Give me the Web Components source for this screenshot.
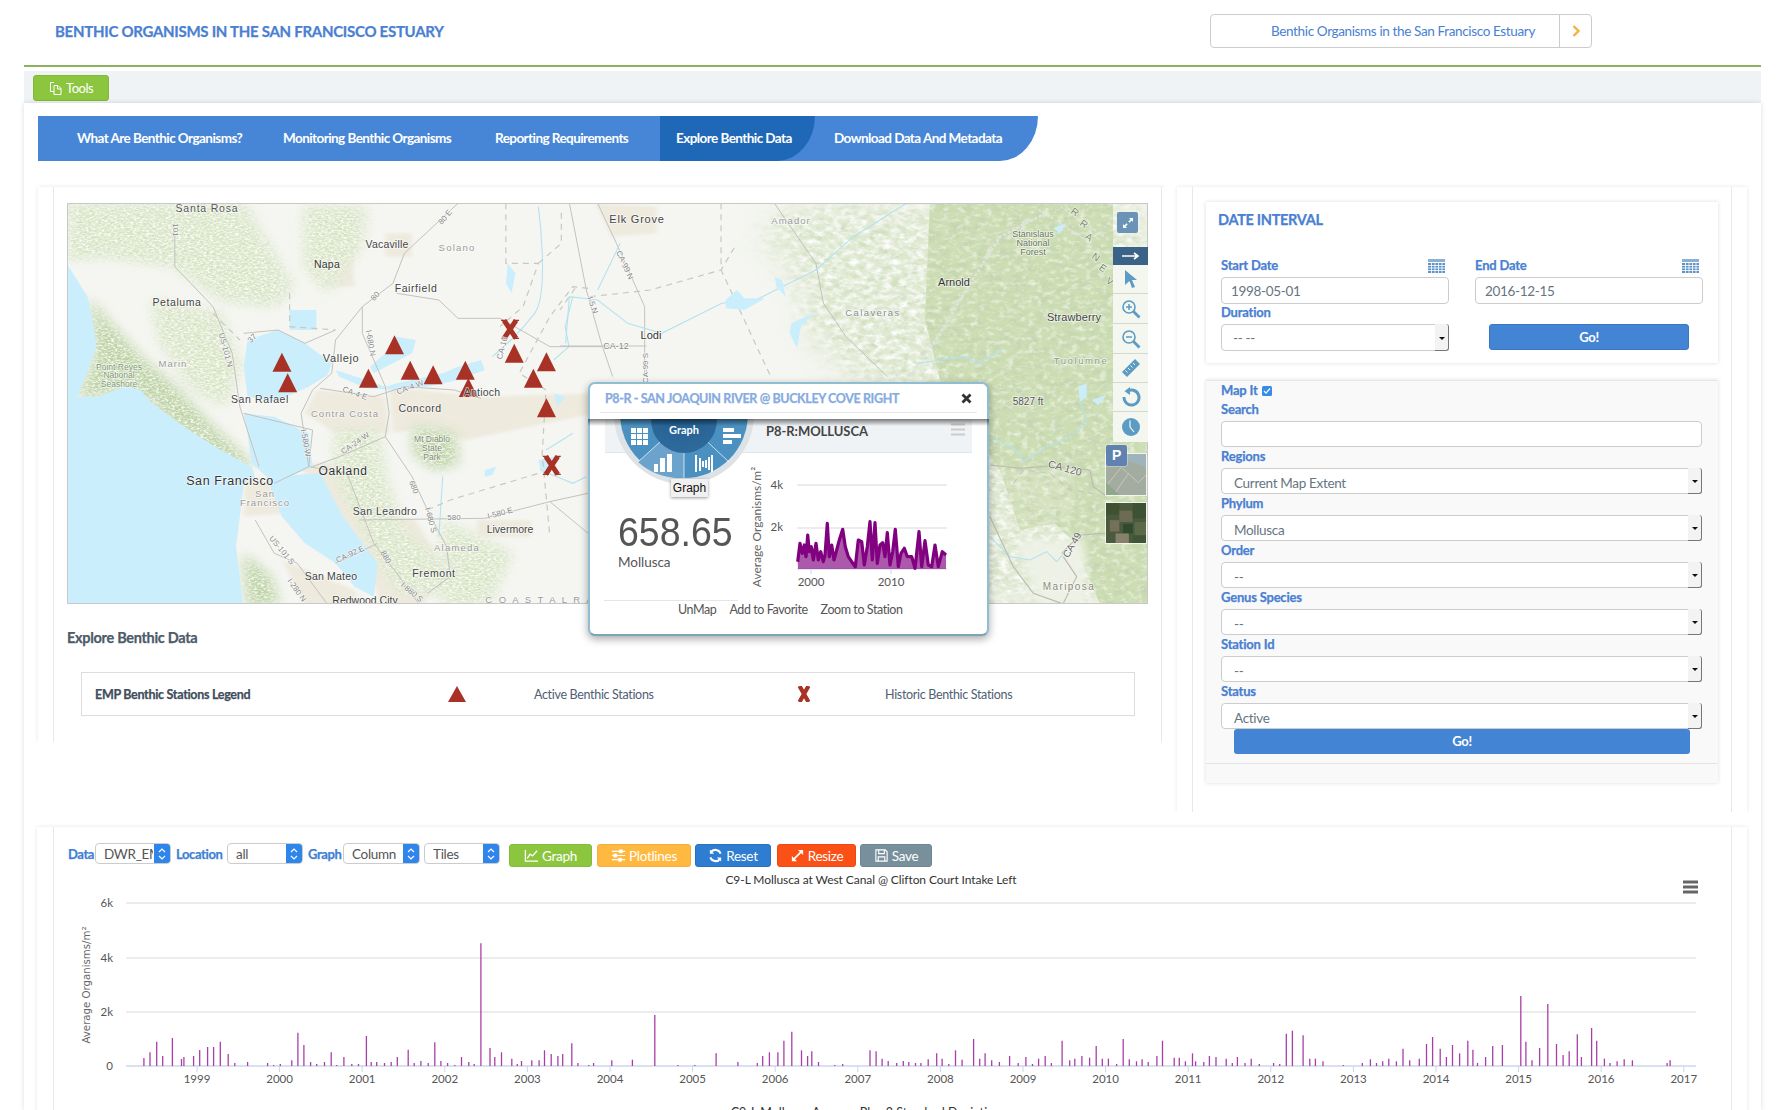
<!DOCTYPE html>
<html lang="en">
<head>
<meta charset="utf-8">
<title>Benthic Organisms in the San Francisco Estuary</title>
<style>
  html, body { margin: 0; height: 1110px; overflow: hidden; background: #fff; }
  body { font-family: Lato, "Liberation Sans", sans-serif; color: #555; letter-spacing: -.3px; }
  #page { display: block; width: 1737px; margin-left: 24px; }
</style>
</head>
<body>
<div id="page">
  <app-header>Benthic Organisms in the San Francisco Estuary</app-header>
  <tools-bar></tools-bar>
  <main-sheet>
    <nav-tabs>
      <nav-tab style="--w:206px">What Are Benthic Organisms?</nav-tab>
      <nav-tab style="--w:212px">Monitoring Benthic Organisms</nav-tab>
      <nav-tab style="--w:165px">Reporting Requirements</nav-tab>
      <nav-tab active style="--w:155px;--p:16px">Explore Benthic Data</nav-tab>
      <nav-tab style="--w:204px;--p:19px">Download Data And Metadata</nav-tab>
    </nav-tabs>
    <div slot="left"><map-panel></map-panel></div>
    <side-panel slot="right">
      <date-card></date-card>
      <filter-card>
        <filter-field label="Search" kind="input"></filter-field>
        <filter-field label="Regions" value="Current Map Extent"></filter-field>
        <filter-field label="Phylum" value="Mollusca"></filter-field>
        <filter-field label="Order" value="--"></filter-field>
        <filter-field label="Genus Species" value="--"></filter-field>
        <filter-field label="Station Id" value="--"></filter-field>
        <filter-field label="Status" value="Active"></filter-field>
      </filter-card>
    </side-panel>
    <chart-panel slot="bottom"></chart-panel>
  </main-sheet>
</div>

<script>
const UI_FONT = 'font-family: Lato, "Liberation Sans", sans-serif;';
const BLUE = '#4a80d2';
// the reference text is a little heavier than Lato bold
const HEAVY = '-webkit-text-stroke: .25px currentColor;';

class AppHeader extends HTMLElement {
  constructor() {
    super();
    this.attachShadow({ mode: 'open' }).innerHTML = `
      <style>
        :host { display: flex; align-items: center; height: 65px; border-bottom: 2px solid #8bb25f; ${UI_FONT} }
        h1 { margin: 0 0 3px 31px; font-size: 15px; font-weight: 700; color: ${BLUE}; text-transform: uppercase; letter-spacing: -.28px; ${HEAVY} }
        .box { display: flex; margin: -3px 169px 0 auto; width: 382px; height: 34px; box-sizing: border-box; border: 1px solid #ccc; border-radius: 4px; }
        .txt { width: 349px; padding-left: 60px; box-sizing: border-box; line-height: 32px; font-size: 13.5px; color: ${BLUE}; letter-spacing: -.36px; white-space: nowrap; border-right: 1px solid #ccc; }
        .go { flex: 1; display: flex; align-items: center; justify-content: center; }
      </style>
      <h1><slot></slot></h1>
      <div class="box">
        <div class="txt">${this.textContent}</div>
        <div class="go"><svg width="10" height="14" viewBox="0 0 10 14"><path d="M2.5 2l5 5-5 5" fill="none" stroke="#f5b13d" stroke-width="2.4"/></svg></div>
      </div>`;
  }
}
customElements.define('app-header', AppHeader);

class ToolsBar extends HTMLElement {
  constructor() {
    super();
    this.attachShadow({ mode: 'open' }).innerHTML = `
      <style>
        :host { display: block; height: 32px; box-sizing: border-box; margin-top: 4px; padding: 4px 0 0 9px; background: #eff3f5; ${UI_FONT} }
        button { all: unset; display: flex; align-items: center; gap: 3px; box-sizing: border-box; width: 76px; height: 26px; padding-left: 15px; background: #8cc63f; border: 1px solid #82b83a; border-radius: 3px; color: #fff; font-size: 13px; letter-spacing: -.45px; }
      </style>
      <button><svg width="14" height="15" viewBox="0 0 14 15" fill="none" stroke="#fff" stroke-width="1"><path d="M5 1.500H1.500v9H5M5 4.500h4l3 3v6H5zM8.500 4.500v3.500H12"/></svg>Tools</button>`;
  }
}
customElements.define('tools-bar', ToolsBar);

class MainSheet extends HTMLElement {
  constructor() {
    super();
    this.attachShadow({ mode: 'open' }).innerHTML = `
      <style>
        :host { display: block; height: 1007px; background: #fff; box-shadow: 0 0 5px rgba(0,0,0,.14); padding: 13px 0 0 14px; box-sizing: border-box; }
        .row { display: flex; align-items: flex-start; gap: 12px; margin-top: 26px; }
        .bottom { margin: 15px 14px 0 -1px; }
      </style>
      <slot></slot>
      <div class="row"><slot name="left"></slot><slot name="right"></slot></div>
      <div class="bottom"><slot name="bottom"></slot></div>`;
  }
}
customElements.define('main-sheet', MainSheet);

class NavTabs extends HTMLElement {
  constructor() {
    super();
    this.attachShadow({ mode: 'open' }).innerHTML = `
      <style>
        :host { display: flex; width: 1000px; height: 45px; padding-left: 39px; box-sizing: border-box; background: #4786d6; border-bottom-right-radius: 38px 45px; }
      </style>
      <slot></slot>`;
  }
}
customElements.define('nav-tabs', NavTabs);

class NavTab extends HTMLElement {
  constructor() {
    super();
    this.attachShadow({ mode: 'open' }).innerHTML = `
      <style>
        :host { display: block; width: var(--w); box-sizing: border-box; padding-left: var(--p, 0); height: 45px; line-height: 45px; color: #fff; font-size: 13.5px; font-weight: 700; white-space: nowrap; letter-spacing: -.56px; ${UI_FONT} }
        :host([active]) { background: #1f68b8; border-bottom-right-radius: 38px 45px; }
      </style>
      <slot></slot>`;
  }
}
customElements.define('nav-tab', NavTab);

class MapPanel extends HTMLElement {
  constructor() {
    super();
    this.attachShadow({ mode: 'open' }).innerHTML = `
      <style>
        :host { display: block; width: 1127px; height: 555px; box-sizing: border-box; padding: 0 0 0 15px; box-shadow: 0 0 4px rgba(0,0,0,.1); ${UI_FONT} clip-path: inset(-6px 0 0 -6px); }
        .inner { height: 555px; width: 1109px; box-sizing: border-box; border-left: 1px solid #e8e8e8; border-right: 1px solid #e8e8e8; padding: 16px 13px 0 13px; }
        .wrap { position: relative; height: 401px; }
        h3 { margin: 24px 0 0; font-size: 14.5px; line-height: 20px; color: #4d5b69; font-weight: 700; letter-spacing: -.3px; ${HEAVY} }
        .legend { display: grid; grid-template-columns: 352px 87px 262px 89px 1fr; align-items: center; height: 44px; margin: 24px 13px 0 14px; padding-left: 13px; box-sizing: border-box; border: 1px solid #ddd; font-size: 12.5px; color: #4f6072; letter-spacing: -.32px; white-space: nowrap; }
        .legend b { color: #3f4d5c; font-weight: 700; letter-spacing: -.3px; ${HEAVY} }
      </style>
      <div class="inner">
        <div class="wrap">
          <topo-map></topo-map>
          <map-tools></map-tools>
          <station-popup></station-popup>
        </div>
        <h3>Explore Benthic Data</h3>
        <div class="legend">
          <b>EMP Benthic Stations Legend</b>
          <svg width="20" height="16" viewBox="0 0 20 16"><path d="M10 0l9 16H1z" fill="#a93226"/></svg>
          <span>Active Benthic Stations</span>
          <svg width="16" height="16" viewBox="0 0 16 16"><path d="M3.500 0l9 16M12.500 0l-9 16" stroke="#a93226" stroke-width="4.200" fill="none"/></svg>
          <span>Historic Benthic Stations</span>
        </div>
      </div>`;
  }
}
customElements.define('map-panel', MapPanel);

class TopoMap extends HTMLElement {
  constructor() {
    super();
    const labels = [
      // x, y, text, size, colour, rotate, spacing
      [207,208,'Santa Rosa',10.5,'#555',0,.8],[387,244,'Vacaville',10.5,'#444',0,.2],[457,248,'Solano',9.5,'#999',0,1.2],
      [327,264,'Napa',10.5,'#333',0,.2],[416,288,'Fairfield',10.5,'#444',0,.6],[177,302,'Petaluma',10.5,'#444',0,.6],
      [119,367,'Point Reyes',8.5,'#7d9874',0,0],[119,375.5,'National',8.5,'#7d9874',0,0],[119,384,'Seashore',8.5,'#7d9874',0,0],
      [173,364,'Marin',9.5,'#9a9a9a',0,1],[341,358,'Vallejo',11,'#444',0,.6],[260,399,'San Rafael',10.5,'#444',0,.6],
      [345,414,'Contra Costa',9.5,'#999',0,1],[420,408,'Concord',10.5,'#444',0,.5],[482,392,'Antioch',10.5,'#444',0,.2],
      [432,439,'Mt Diablo',8.5,'#7d8a70',0,0],[432,448,'State',8.5,'#7d8a70',0,0],[432,457,'Park',8.5,'#7d8a70',0,0],
      [343,471,'Oakland',12,'#333',0,.6],[230,481,'San Francisco',12.5,'#333',0,.6],[265,494,'San',9.5,'#999',0,1],[265,503,'Francisco',9.5,'#999',0,1],
      [385,511,'San Leandro',10.5,'#444',0,.4],[510,529,'Livermore',10.5,'#444',0,0],[457,548,'Alameda',9.5,'#999',0,1.2],
      [331,576,'San Mateo',10.5,'#444',0,.2],[434,573,'Fremont',10.5,'#444',0,.6],[365,600,'Redwood City',10.5,'#444',0,0],
      [560,600,'C O A S T A L   R A N G E',9.5,'#999',0,2],[637,219,'Elk Grove',11,'#444',0,.8],[791,221,'Amador',9.5,'#999',0,1],
      [651,335,'Lodi',11,'#333',0,0],[616,346,'CA-12',9,'#888',0,0],[873,313,'Calaveras',9.5,'#8a8a8a',0,1.4],
      [954,282,'Arnold',11,'#333',0,0],[1074,317,'Strawberry',11,'#444',0,.1],[1033,234,'Stanislaus',9,'#66765a',0,0],
      [1033,243,'National',9,'#66765a',0,0],[1033,251.5,'Forest',9,'#66765a',0,0],[1081,361,'Tuolumne',9.5,'#8a9a82',0,1.6],
      [1075,212,'R',10,'#7a8a6a',35],[1084,224,'R',10,'#7a8a6a',35],[1089,237,'A',10,'#7a8a6a',35],[1096,257,'N',10,'#7a8a6a',35],
      [1103,268,'E',10,'#7a8a6a',35],[1110,281,'V',10,'#7a8a6a',35],[1028,401,'5827 ft',10,'#555',0,0],
      [1065,468,'CA 120',10.5,'#666',15,0],[1072,545,'CA 49',10,'#666',-60,0],[1069,586,'Mariposa',10,'#8a8a7a',0,1.4],
      [176,230,'101',8,'#888',90],[445,217,'80 E',8,'#888',-50],[375,296,'80',8,'#888',-50],[252,338,'37',8,'#888',-45],
      [226,350,'US-101 N',8,'#888',75],[371,343,'I-680 N',8,'#888',80],[502,348,'CA-16',8,'#888',-75],[593,305,'I-5 N',8,'#888',70],
      [625,265,'CA-99 N',8,'#888',65],[645,368,'CA-99 S',8,'#888',-90],[306,443,'I-580 W',8,'#888',80],[355,443,'CA-24 W',8,'#888',-35],
      [414,487,'680',8,'#888',70],[431,520,'I-680 S',8,'#888',75],[454,517,'580',8,'#888',0],[500,513,'I-580 E',8,'#888',-15],
      [282,550,'US-101 S',8,'#888',50],[350,554,'CA-92 E',8,'#888',-25],[386,557,'880',8,'#888',60],[297,590,'I-280 N',8,'#888',55],
      [412,592,'I-880 S',8,'#888',40],[355,393,'CA-4 E',8,'#888',20],[410,387,'CA-4 W',8,'#888',-20]
    ];
    const text = labels.map(([x, y, t, s, c, r = 0, ls = 0]) =>
      `<text x="${x}" y="${y}" font-size="${s}" fill="${c}" letter-spacing="${ls}" transform="rotate(${r} ${x} ${y})" dy=".35em">${t}</text>`).join('');
    const tri = [[580,488],[595,550],[874,436],[806,536],[915,512],[975,526],[1059,512],[1067,564],[1187,461],[1271,487],[1237,536],[1271,625]]
      .map(([x, y]) => { const a = 60 + x / 2.613, b = 200 + y / 3; return `<path d="M${a} ${b - 10}l9.500 19h-19z" fill="#a93226"/>`; }).join('');
    const xs = [[1176,388],[1285,796]]
      .map(([x, y]) => { const a = 60 + x / 2.613, b = 200 + y / 3; return `<path d="M${a - 6} ${b - 9}l12 18M${a + 6} ${b - 9}l-12 18" stroke="#a93226" stroke-width="5" fill="none"/><path d="M${a - 9} ${b - 9}h6M${a + 3} ${b - 9}h6M${a - 9} ${b + 9}h6M${a + 3} ${b + 9}h6" stroke="#a93226" stroke-width="1.400"/>`; }).join('');
    this.attachShadow({ mode: 'open' }).innerHTML = `
      <style>
        :host { display: block; height: 401px; box-sizing: border-box; }
        svg { display: block; width: 1081px; height: 401px; font-family: "Liberation Sans", sans-serif; letter-spacing: 0; }
        text { text-anchor: middle; paint-order: stroke; stroke: rgba(255,255,255,.7); stroke-width: 1.4px; }
        .road { fill: none; stroke: #c2c2bf; stroke-width: 1; vector-effect: non-scaling-stroke; }
        .dash { fill: none; stroke: #c8c8c2; stroke-width: 1.2; stroke-dasharray: 6 5; vector-effect: non-scaling-stroke; }
        .river { fill: none; stroke: #b4e2f0; stroke-width: 1.1; vector-effect: non-scaling-stroke; }
      </style>
      <svg viewBox="67 203 1081 401">
        <defs>
          <filter id="tex" x="-15%" y="-15%" width="130%" height="130%">
            <feGaussianBlur in="SourceGraphic" stdDeviation="16" result="soft"/>
            <feTurbulence type="fractalNoise" baseFrequency=".12 .2" numOctaves="4" seed="7" result="n"/>
            <feColorMatrix in="n" type="matrix" values="0 0 0 0 1  0 0 0 0 1  0 0 0 0 1  2.400 0 0 0 -.98" result="w"/>
            <feComposite in="w" in2="soft" operator="in" result="wm"/>
            <feTurbulence type="fractalNoise" baseFrequency=".1 .17" numOctaves="4" seed="21" result="n2"/>
            <feColorMatrix in="n2" type="matrix" values="0 0 0 0 .6  0 0 0 0 .7  0 0 0 0 .48  2.200 0 0 0 -.98" result="d"/>
            <feComposite in="d" in2="soft" operator="in" result="dm"/>
            <feMerge><feMergeNode in="soft"/><feMergeNode in="dm"/><feMergeNode in="wm"/></feMerge>
          </filter>
          <filter id="dk" x="-5%" y="-5%" width="110%" height="110%">
            <feTurbulence type="fractalNoise" baseFrequency=".08 .16" numOctaves="5" seed="12" result="n"/>
            <feColorMatrix in="n" type="matrix" values="0 0 0 0 .55  0 0 0 0 .66  0 0 0 0 .43  2.400 0 0 0 -1" result="w"/>
            <feComposite in="w" in2="SourceAlpha" operator="in" result="wm"/>
            <feTurbulence type="fractalNoise" baseFrequency=".14 .22" numOctaves="3" seed="4" result="n2"/>
            <feColorMatrix in="n2" type="matrix" values="0 0 0 0 .95  0 0 0 0 .97  0 0 0 0 .9  1.600 0 0 0 -.78" result="w2"/>
            <feComposite in="w2" in2="SourceAlpha" operator="in" result="wm2"/>
            <feMerge><feMergeNode in="SourceGraphic"/><feMergeNode in="wm"/><feMergeNode in="wm2"/></feMerge>
          </filter>
          <filter id="soft" x="-10%" y="-10%" width="120%" height="120%"><feGaussianBlur stdDeviation="5"/></filter>
        </defs>
        <rect x="67" y="203" width="1081" height="401" fill="#f5f6f2"/>

        <!-- hills and towns, left half, in the crop's own scale -->
        <g transform="translate(60 200) scale(.3827 .3333)">
          <g filter="url(#soft)" fill="#eeeade">
            <path d="M670 570L850 590 860 700 720 700 640 640z"/>
            <path d="M860 560L1100 590 1400 580 1400 640 1060 720 960 680 870 700z"/>
            <path d="M680 150L760 150 770 260 700 260z"/>
            <path d="M850 100L920 100 920 170 850 170z"/>
            <path d="M620 790L780 790 860 950 930 960 1000 1100 950 1215 840 1215 780 1040 680 880z"/>
            <path d="M1090 960L1230 960 1230 1010 1090 1010z"/>
            <path d="M480 840L580 840 590 940 480 950z"/>
            <path d="M580 1080L770 1170 780 1215 640 1215z"/>
            <path d="M1400 10L1560 20 1560 100 1440 110z"/>
          </g>
          <g filter="url(#tex)" fill="#dde8cb">
            <path d="M20 10H480L610 260 560 320 420 300 300 200 120 170 20 180z"/>
            <path d="M640 20H800L790 130 700 280 640 200z"/>
            <path d="M240 300L420 340 470 500 430 620 340 560 260 420z"/>
            <path d="M720 690H830L850 830 900 1000 980 1060 1010 1180H880L800 1010 720 830z"/>
            <path d="M1000 960L1180 1060 1120 1215H1000z"/>
          </g>
          <g filter="url(#tex)" fill="#bcd3a0">
            <path d="M72 290L140 380 210 470 300 560 400 680 500 790 480 810 400 760 300 680 240 610 170 560 100 590 45 590 90 480 85 360z"/>
            <path d="M925 680L1030 700 1040 790 980 810 925 760z"/>
            <path d="M480 1060L550 1130 570 1215H490z"/>
          </g>
        </g>

        <!-- green mountains, right half -->
        <g filter="url(#tex)" fill="#e0e9d2"><path d="M793 203H1150V604H960L930 560 950 420 860 380 810 340 800 280 760 240z"/></g>
        <g filter="url(#dk)" fill="#cddeb4">
          <path d="M930 203H1113V440L1148 442V604H1100L1072 540 1000 470 940 380 925 320z"/>
        </g>
        <g filter="url(#dk)" fill="#d6e3c0"><path d="M1000 470L1075 470 1075 520 1020 530z"/></g>
        <g fill="#eef2e6" filter="url(#soft)"><path d="M1014 540L1085 540 1085 604 1040 604z"/></g>

        <!-- water -->
        <g transform="translate(60 200) scale(.3827 .3333)" fill="#cbeefc">
          <path d="M20 195L45 240 72 290 85 360 95 440 70 520 45 590 100 590 170 560 210 570 240 610 300 660 350 700 420 750 500 800 510 830 480 850 470 950 460 1040 470 1130 478 1215H20z"/>
          <path d="M490 420L570 390 640 430 710 490 700 525 650 560 560 605 490 590 480 500z"/>
          <path d="M480 640L560 650 650 700 660 800 600 830 540 830 500 790 490 700z"/>
          <path d="M540 830L680 820 740 950 830 1090 820 1190 770 1160 720 1090 640 1030 580 950z"/>
          <path d="M810 500L850 460 880 410 930 420 920 460 870 490 820 520z"/>
          <path d="M600 330L670 330 670 390 600 390z"/>
          <path d="M720 510L800 540 850 560 880 550 1000 520 1040 500 1100 480 1110 510 1040 540 960 560 880 570 800 565 730 530z"/>
          <path d="M1170 190L1190 220 1180 280 1165 250z"/>
          <path d="M1250 780L1290 770 1290 810 1255 810z"/>
          <path d="M1110 810L1140 800 1130 825 1110 830z"/>
          <path d="M1290 580L1320 590 1300 620z"/>
        </g>
        <g transform="translate(60 200) scale(.3827 .3333)">
          <path class="river" d="M1130 470C1170 430 1200 400 1240 340S1250 20 1250 20"/>
          <path class="river" d="M1290 480L1330 440 1320 380 1340 290"/>
          <path class="river" d="M1270 750L1340 700M1255 810L1340 850 1375 830M990 1010L1000 830"/>
          <path class="road" d="M300 70V200L400 320 450 460 470 620 520 800M480 640L660 690 650 800 560 850"/>
          <path class="road" d="M1040 10L900 160 870 250 790 320 720 420 710 520 660 570 630 640 650 800 750 820 820 1030 880 1120 940 1215"/>
          <path class="road" d="M480 400L570 390 640 430 720 390M880 280L990 300 1040 355 1150 355 1280 440 1420 440"/>
          <path class="road" d="M790 320V400L850 560 860 640 850 710 920 830 960 930 1010 1040 1020 1130 960 1180"/>
          <path class="road" d="M680 565L820 590 900 560 1030 570 1100 595M850 710L730 770 660 800"/>
          <path class="road" d="M780 960L1110 955 1280 905 1380 880M510 960L560 1060 620 1090 700 1215M720 1090L830 1030M1280 905L1380 1000"/>
          <path class="dash" d="M1165 10V190L1250 190 1210 320 1150 380M1250 190L1310 130 1310 30M600 280L600 380 720 390M400 340L470 420"/>
          <path class="dash" d="M1380 265L1340 260 1280 350 1200 520 1270 570 1260 760 1280 1010"/>
          <path class="dash" d="M960 930L1020 900 1250 820"/>
        </g>
        <!-- right half roads and rivers -->
        <g transform="translate(560 200) scale(.3763 .3333)">
          <path class="dash" d="M428 10L428 210 560 530M80 290L240 270 428 210 470 130M40 265L0 330"/>
          <path class="road" d="M25 10L70 270 110 430 140 530M100 10L150 130 225 320V530M0 438H230"/>
          <path class="road" d="M570 10L680 190 700 310 760 410 870 530"/>
          <path class="river" d="M160 130L100 270M15 430L25 290 100 300 180 370 270 400 430 310 520 300 590 260 680 210 780 110 920 10"/>
          <path d="M440 300L470 270 490 295 545 295 490 330 440 325z" fill="#cbeefc"/>
          <path d="M570 230L590 240 600 290 575 260z" fill="#cbeefc"/>
          <path d="M615 370L680 335 640 380 630 445 610 400z" fill="#cbeefc"/>
          <path d="M1310 85L1345 70 1330 100z" fill="#cbeefc"/>
          <path d="M930 530L1010 400 1090 250 1170 110 1290 40" fill="none" stroke="#dfe3e3" stroke-width="2.500" stroke-dasharray="3 2" vector-effect="non-scaling-stroke"/>
          <path d="M950 490L1075 470 1110 490 1175 450" class="river"/>
          <path d="M1260 20L1410 130M1330 20L1460 120" fill="none" stroke="#dfe3e3" stroke-width="1.500" stroke-dasharray="3 2" vector-effect="non-scaling-stroke"/>
        </g>
        <!-- lower right -->
        <g transform="translate(980 380) scale(.3333)">
          <path d="M295 20L320 10 320 50 300 65z M335 60L380 45 355 75z" fill="#cbeefc"/>
          <path class="river" d="M30 170L110 210 130 245 200 200 260 175 320 130 300 65M30 470L90 530 150 540 200 515 230 545 260 510"/>
          <path d="M30 255L120 265 210 258 330 270 340 320 375 345M245 520L300 465 375 460M250 530L290 590 250 670M30 410L100 560 160 640 245 670" fill="none" stroke="#bcbcb6" stroke-width="1.200" vector-effect="non-scaling-stroke"/>
          <path class="dash" d="M100 310L130 270 210 280 270 330 340 340"/>
        </g>
        ${tri}${xs}
        <g>${text}</g>
        <rect x="67.500" y="203.500" width="1080" height="400" fill="none" stroke="#c8c8c8"/>
      </svg>`;
  }
}
customElements.define('topo-map', TopoMap);

class MapTools extends HTMLElement {
  constructor() {
    super();
    const ic = '#5b9bc4';
    const cell = (h, svg) => `<div class="cell" style="height:${h}px">${svg}</div>`;
    this.attachShadow({ mode: 'open' }).innerHTML = `
      <style>
        :host { position: absolute; left: 1046px; top: 9px; width: 35px; height: 335px; }
        .exp { position: absolute; left: 4px; top: 0; width: 21px; height: 21px; background: #6b93b8; border-radius: 2px; box-shadow: 0 0 0 2px rgba(255,255,255,.25); display: flex; align-items: center; justify-content: center; }
        .strip { position: absolute; left: 0; top: 35px; width: 35px; background: #f4f6f0; }
        .cell { display: flex; align-items: center; justify-content: center; border-bottom: 1px solid #d5d8cc; box-sizing: border-box; }
        .cell:last-child { border-bottom: 0; }
        .dark { background: #3b6388; height: 18px; display: flex; align-items: center; justify-content: center; }
        .p { position: absolute; left: -7px; top: 233px; width: 21px; height: 21px; background: #5f82b0; border-radius: 2px; z-index: 1; color: #fff; font: 700 14px/21px "Liberation Sans", sans-serif; text-align: center; box-shadow: 0 0 0 1px rgba(255,255,255,.3); }
        .t { position: absolute; left: -8px; display: block; border: 1px solid rgba(255,255,255,.7); box-sizing: border-box; }
      </style>
      <div class="exp"><svg width="12" height="12" viewBox="0 0 12 12" fill="#fff"><path d="M7 1h4v4L9.600 3.600 7.500 5.700 6.300 4.500 8.400 2.400zM5 11H1V7l1.400 1.400 2.100-2.100 1.200 1.200-2.100 2.100z"/></svg></div>
      <div class="strip">
        <div class="dark"><svg width="18" height="8" viewBox="0 0 18 8"><path d="M0 4h15M12 1l4 3-4 3" fill="none" stroke="#fff" stroke-width="1.600"/></svg></div>
        ${cell(29, `<svg width="16" height="20" viewBox="0 0 16 20"><path d="M2 1l12 10H9l3 7-3 1-2.500-7L2 16z" fill="${ic}"/></svg>`)}
        ${cell(30, `<svg width="20" height="20" viewBox="0 0 20 20" fill="none" stroke="${ic}"><circle cx="8" cy="8" r="6" stroke-width="1.600"/><path d="M12.500 12.500L18.500 18.500" stroke-width="2.800"/><path d="M8 5v6M5 8h6" stroke-width="1.500"/></svg>`)}
        ${cell(30, `<svg width="20" height="20" viewBox="0 0 20 20" fill="none" stroke="${ic}"><circle cx="8" cy="8" r="6" stroke-width="1.600"/><path d="M12.500 12.500L18.500 18.500" stroke-width="2.800"/><path d="M5 8h6" stroke-width="1.500"/></svg>`)}
        ${cell(29, `<svg width="20" height="20" viewBox="0 0 20 20"><path d="M14 1l5 5L6 19l-5-5z" fill="${ic}"/><path d="M12 5l2 2M9.500 7.500l2 2M7 10l2 2M4.500 12.500l2 2" stroke="#f4f6f0" stroke-width="1"/></svg>`)}
        ${cell(29, `<svg width="20" height="20" viewBox="0 0 20 20" fill="none"><path d="M6 4.500A7.500 7.500 0 1 1 3 10" stroke="${ic}" stroke-width="3"/><path d="M9 0v8L3.500 4.200z" fill="${ic}"/></svg>`)}
        ${cell(30, `<svg width="20" height="20" viewBox="0 0 20 20"><circle cx="10" cy="10" r="9" fill="${ic}"/><path d="M9 3.500V10l4 5" stroke="#f4f6f0" stroke-width="1.200" fill="none"/></svg>`)}
      </div>
      <svg class="t" style="top:241px" width="42" height="43" viewBox="0 0 42 43">
        <rect width="42" height="43" fill="#a3aca0"/>
        <path d="M0 0L42 0 42 14 20 6 0 12z" fill="#9fb3bb"/>
        <path d="M0 34L16 14 34 30 42 22M8 43L24 20" stroke="#c8c8bc" fill="none"/>
        <path d="M0 30L14 43H0z" fill="#8fa78b"/>
      </svg>
      <svg class="t" style="top:290px" width="42" height="42" viewBox="0 0 42 42">
        <rect width="42" height="42" fill="#4a5a3c"/>
        <path d="M0 0h14v12H0z" fill="#3e5131"/><path d="M14 8h14v12H14z" fill="#6c6b54"/><path d="M28 0h14v16H28z" fill="#3c5232"/>
        <path d="M4 18h10v12H4z" fill="#75705a"/><path d="M18 22h10v10H18z" fill="#2f4a2e"/><path d="M30 20h12v14H30z" fill="#5d6a4a"/>
        <path d="M10 32h14v10H10z" fill="#87806a"/><path d="M28 34h14v8H28z" fill="#3f5536"/>
      </svg>
      <div class="p">P</div>`;
  }
}
customElements.define('map-tools', MapTools);

class StationPopup extends HTMLElement {
  constructor() {
    super();
    const pts = [[683,575],[690,520],[697,550],[703,525],[708,560],[713,495],[718,545],[724,530],[730,570],[738,520],[745,570],[752,545],[760,575],[765,555],[772,460],[778,560],[785,525],[792,570],[800,540],[808,510],[818,478],[826,530],[835,560],[845,575],[856,590],[865,510],[875,515],[883,585],[892,530],[900,455],[907,570],[915,458],[922,580],[930,525],[938,518],[945,560],[952,488],[960,585],[968,545],[976,478],[985,590],[993,550],[1003,535],[1012,560],[1025,560],[1035,595],[1047,485],[1055,590],[1065,512],[1075,585],[1085,590],[1095,525],[1105,590],[1117,545],[1128,555]];
    const line = pts.map(p => `${(p[0] / 3).toFixed(1)},${(p[1] / 3).toFixed(1)}`).join(' ');
    this.attachShadow({ mode: 'open' }).innerHTML = `
      <style>
        :host { position: absolute; left: 521px; top: 179px; width: 401px; height: 254px; box-sizing: border-box; background: #fff; border: 2px solid #8fbdd2; border-bottom-color: #7ba4b5; border-radius: 7px; box-shadow: 0 3px 8px rgba(0,0,0,.35); ${UI_FONT} z-index: 2; }
        .head { height: 28px; margin: 0 10px; border-bottom: 1px solid #e6e6e6; display: flex; align-items: center; justify-content: space-between; padding: 0 5px; }
        .head b { font-size: 12.5px; color: #86abe0; letter-spacing: -.38px; white-space: nowrap; ${HEAVY} }
        .body { position: absolute; left: 0; right: 0; top: 35px; bottom: 0; border-radius: 0 0 6px 6px; padding: 0 14px; }
        .sh { position: absolute; left: -2px; right: -2px; top: 0; height: 7px; background: linear-gradient(rgba(0,0,0,.5), rgba(0,0,0,0)); z-index: 2; }
        .band { height: 34px; margin: 0 1px; background: #eff3f6; border-bottom: 1px solid #dfe5ea; display: flex; padding: 4px 7px 0 161px; box-sizing: border-box; justify-content: space-between; }
        .band b { font-size: 13px; color: #454545; letter-spacing: -.05px; }
        .wheel { position: absolute; left: 14px; top: 0; }
        .tip { position: absolute; left: 81px; top: 60px; width: 37px; height: 18px; background: #f0f0f0; box-shadow: 0 1px 3px rgba(0,0,0,.4); font: 12px/18px "Liberation Sans", sans-serif; letter-spacing: 0; color: #111; text-align: center; }
        .num { position: absolute; left: 28px; top: 90px; font: 37.5px/46px "Liberation Sans", sans-serif; letter-spacing: 0; color: #555; transform: scaleY(1.06); }
        .sub { position: absolute; left: 28px; top: 133px; font-size: 13.5px; line-height: 20px; color: #555; letter-spacing: -.05px; }
        .rule { position: absolute; left: 14px; top: 181px; width: 134px; height: 1px; background: #e0e6ea; }
        .links { position: absolute; left: 88px; top: 181px; display: flex; gap: 13px; font-size: 12.5px; line-height: 20px; color: #555; letter-spacing: -.42px; white-space: nowrap; }
        .spark { position: absolute; left: 155px; top: 0; }
      </style>
      <div class="head">
        <b>P8-R - SAN JOAQUIN RIVER @ BUCKLEY COVE RIGHT</b>
        <svg width="11" height="11" viewBox="0 0 11 11"><path d="M1.500 1.500l8 8M9.500 1.500l-8 8" stroke="#333" stroke-width="2.800"/></svg>
      </div>
      <div class="body">
        <div class="band">
          <b>P8-R:MOLLUSCA</b>
          <svg width="14" height="13" viewBox="0 0 14 13"><path d="M0 1.500h14M0 6.500h14M0 11.500h14" stroke="#ccc" stroke-width="2"/></svg>
        </div>
        <div class="sh"></div>
        <svg class="wheel" width="150" height="80" viewBox="604 419 150 80" style="letter-spacing:0">
          <defs>
            <radialGradient id="hub" cx=".5" cy=".1" r=".9"><stop offset="0" stop-color="#1a5a8e"/><stop offset="1" stop-color="#2f6a9b"/></radialGradient>
            <clipPath id="clip"><rect x="600" y="419" width="160" height="80"/></clipPath>
          </defs>
          <g clip-path="url(#clip)">
            <circle cx="684" cy="414" r="70" fill="#dde2e6"/>
            <circle cx="684" cy="414" r="64" fill="#4a90c0"/>
            <path d="M684 420L638 462A64 64 0 0 0 684 478z" fill="#6ba3cc"/>
            <path d="M684 420L638 462M684 420L729 462M684 440V478" stroke="#fff" stroke-opacity=".7" stroke-width="1"/>
            <circle cx="684" cy="420" r="33" fill="url(#hub)"/>
            <path d="M631 428h5v5h-5zM637 428h5v5h-5zM643 428h5v5h-5zM631 434h5v5h-5zM637 434h5v5h-5zM643 434h5v5h-5zM631 440h5v5h-5zM637 440h5v5h-5zM643 440h5v5h-5z" fill="#fff"/>
            <path d="M723 428h11v4h-11zM723 434h18v4h-18zM723 440h9v4h-9z" fill="#fff"/>
            <path d="M654 464h4v8h-4zM660 458h5v14h-5zM667 454h5v18h-5z" fill="#fff"/>
            <path d="M695 455h2v17h-2zM699 458h2v13h-2zM702 461h2v6h-2zM705 460h2v8h-2zM708 457h2v13h-2zM711 455h2v17h-2z" fill="#fff"/>
            <text x="684" y="434" text-anchor="middle" font-size="11" font-weight="700" fill="#fff">Graph</text>
          </g>
        </svg>
        <div class="tip">Graph</div>
        <div class="num">658.65</div>
        <div class="sub">Mollusca</div>
        <div class="rule"></div>
        <svg class="spark" width="240" height="178" viewBox="0 0 240 178" style="letter-spacing:0">
          <g transform="translate(-745 -419)">
            <path d="M797 485h150M797 528h150" stroke="#e6e6e6" stroke-width="1.400"/>
            <path d="M797 569h150" stroke="#ccd6eb"/>
            <path d="M811 569v5M891 569v5" stroke="#ccd6eb"/>
            <text x="783" y="489" font-size="11.500" text-anchor="end" fill="#555">4k</text>
            <text x="783" y="531" font-size="11.500" text-anchor="end" fill="#555">2k</text>
            <text x="811" y="586" font-size="11.500" text-anchor="middle" fill="#555">2000</text>
            <text x="891" y="586" font-size="11.500" text-anchor="middle" fill="#555">2010</text>
            <text transform="translate(761 527) rotate(-90)" font-size="12" text-anchor="middle" fill="#666">Average Organisms/m²</text>
            <g transform="translate(570 370)">
              <polygon points="228,199 ${line} 376,199" fill="#800080" fill-opacity=".65"/>
              <polyline points="${line}" fill="none" stroke="#800080" stroke-width="3.200" stroke-linejoin="round"/>
            </g>
          </g>
        </svg>
        <div class="links"><span>UnMap</span><span>Add to Favorite</span><span>Zoom to Station</span></div>
      </div>`;
  }
}
customElements.define('station-popup', StationPopup);

class SidePanel extends HTMLElement {
  constructor() {
    super();
    this.attachShadow({ mode: 'open' }).innerHTML = `
      <style>
        :host { display: block; width: 570px; height: 625px; box-sizing: border-box; padding: 0 15px; background: #fff; box-shadow: 0 0 4px rgba(0,0,0,.1); clip-path: inset(-6px -6px 0 -6px); }
        .inner { height: 625px; box-sizing: border-box; border-left: 1px solid #e8e8e8; border-right: 1px solid #e8e8e8; padding: 15px 13px 0 13px; }
      </style>
      <div class="inner"><slot></slot></div>`;
  }
}
customElements.define('side-panel', SidePanel);

const FIELD_CSS = `
  label, .lbl { display: block; font-size: 13px; font-weight: 700; color: ${BLUE}; line-height: 19px; letter-spacing: -.2px; white-space: nowrap; ${HEAVY} }
  .ctl { position: relative; box-sizing: border-box; border: 1px solid #ccc; border-radius: 4px; background: #fff; font-size: 13.5px; color: #667582; padding-left: 12px; white-space: nowrap; letter-spacing: -.32px; }
  .ctl.arrow::after { content: ''; position: absolute; right: -1px; top: -1px; bottom: -1px; width: 13px; background: #f3f3f3; border-right: 1px solid #777; border-bottom: 1px solid #777; border-radius: 0 3px 3px 0; }
  .ctl.arrow::before { content: ''; position: absolute; z-index: 1; right: 3px; top: 50%; margin-top: -1px; border: 3px solid transparent; border-top: 3px solid #111; border-bottom: 0; }
`;

class DateCard extends HTMLElement {
  constructor() {
    super();
    const cal = `<svg class="cal" width="17" height="14" viewBox="0 0 17 14"><rect width="17" height="3" fill="#8ab0d4"/><path d="M0 4h17v10H0z" fill="#5d93c6"/><path d="M0 6.500h17M0 9h17M0 11.500h17M3.500 4v10M7 4v10M10.500 4v10M14 4v10" stroke="#fff" stroke-width=".8"/></svg>`;
    this.attachShadow({ mode: 'open' }).innerHTML = `
      <style>
        :host { display: block; height: 161px; box-sizing: border-box; padding: 8px 15px 0 15px; background: #fff; box-shadow: 0 0 4px rgba(0,0,0,.14); ${UI_FONT} }
        ${FIELD_CSS}
        h4 { margin: 0 0 0 -3px; font-size: 14.5px; line-height: 20px; color: ${BLUE}; font-weight: 700; letter-spacing: -.3px; ${HEAVY} }
        .grid { display: grid; grid-template-columns: 228px 228px; column-gap: 26px; margin-top: 24px; }
        .top { display: flex; justify-content: space-between; height: 23px; align-items: center; padding-right: 4px; }
        .in { height: 27px; line-height: 26px; padding-left: 9px; }
        .dur { line-height: 16px; height: 20px; }
        .go { height: 26px; margin: 0 14px 0 14px; background: #4484d4; border: 1px solid #3b78c4; border-radius: 3px; box-sizing: border-box; color: #fff; font-size: 13px; font-weight: 700; line-height: 24px; text-align: center; }
      </style>
      <h4>DATE INTERVAL</h4>
      <div class="grid">
        <div class="top"><label>Start Date</label>${cal}</div>
        <div class="top"><label>End Date</label>${cal}</div>
        <div class="ctl in">1998-05-01</div>
        <div class="ctl in">2016-12-15</div>
        <label class="dur">Duration</label><div></div>
        <div class="ctl in arrow" style="padding-left:11px">-- --</div>
        <div class="go">Go!</div>
      </div>`;
  }
}
customElements.define('date-card', DateCard);

class FilterCard extends HTMLElement {
  constructor() {
    super();
    this.attachShadow({ mode: 'open' }).innerHTML = `
      <style>
        :host { display: block; height: 403px; margin-top: 17px; box-sizing: border-box; padding: 0 16px 0 15px; background: #f9f9f9; border-top: 1px solid #e6e6e6; box-shadow: 0 0 4px rgba(0,0,0,.14); ${UI_FONT} }
        ${FIELD_CSS}
        .map { display: flex; align-items: center; gap: 4px; height: 19px; }
        .map svg { margin-top: 1px; }
        .go { height: 25px; margin: 0 12px 0 13px; background: #4484d4; border-radius: 3px; color: #fff; font-size: 13px; font-weight: 700; line-height: 25px; text-align: center; }
        hr { margin: 9px -16px 0 -15px; border: 0; border-top: 1px solid #e4e4e4; }
      </style>
      <div class="map"><span class="lbl">Map It</span><svg width="10" height="10" viewBox="0 0 10 10"><rect width="10" height="10" rx="1.500" fill="#3a8be8"/><path d="M2 5l2 2.200L8 2.500" stroke="#fff" stroke-width="1.200" fill="none"/></svg></div>
      <slot></slot>
      <div class="go">Go!</div>
      <hr>`;
  }
}
customElements.define('filter-card', FilterCard);

class FilterField extends HTMLElement {
  constructor() {
    super();
    const value = this.getAttribute('value') || '';
    const arrow = this.getAttribute('kind') === 'input' ? '' : 'arrow';
    this.attachShadow({ mode: 'open' }).innerHTML = `
      <style>
        :host { display: block; height: 47px; ${UI_FONT} }
        ${FIELD_CSS}
        label { margin-bottom: 2px; }
        .ctl { height: 26px; line-height: 28px; }
      </style>
      <label>${this.getAttribute('label')}</label>
      <div class="ctl ${arrow}">${value}</div>`;
  }
}
customElements.define('filter-field', FilterField);

class SpinSelect extends HTMLElement {
  constructor() {
    super();
    this.attachShadow({ mode: 'open' }).innerHTML = `
      <style>
        :host { display: block; position: relative; height: 21px; box-sizing: border-box; border: 1px solid #ccc; border-radius: 4px; background: #fff; overflow: hidden; font-size: 13.5px; line-height: 20px; padding: 0 17px 0 8px; color: #555; white-space: nowrap; }
        .b { position: absolute; right: 0; top: 0; bottom: 0; width: 16px; background: #2f86ea; display: flex; align-items: center; justify-content: center; }
        .clip { overflow: hidden; height: 100%; }
      </style>
      <div class="clip"><slot></slot></div>
      <div class="b"><svg width="8" height="14" viewBox="0 0 8 14" fill="none" stroke="#fff" stroke-width="1.200"><path d="M1 5l3-3 3 3M1 9l3 3 3-3"/></svg></div>`;
  }
}
customElements.define('spin-select', SpinSelect);

class ToolBtn extends HTMLElement {
  constructor() {
    super();
    const icons = {
      graph: '<path d="M1.500 2v12H15M3.500 11l3-4.500 2.500 2L14 3" stroke-width="1.400"/>',
      sliders: '<path d="M1 3.500h14M1 8h14M1 12.500h14" stroke-width="1.300"/><path d="M9 2h3v3H9zM3 6.500h3v3H3zM8 11h3v3H8z" fill="#fff"/>',
      reset: '<path d="M13.500 6A6 6 0 0 0 3 4.500M2.500 10A6 6 0 0 0 13 11.500" stroke-width="2.200"/><path d="M2 1.500v4.500h4.500zM14 14.500V10H9.500z" fill="#fff" stroke-width="0"/>',
      resize: '<path d="M3 13L13 3" stroke-width="1.800"/><path d="M8.500 2H14v5.500zM2 8.500V14h5.500z" fill="#fff" stroke-width="0"/>',
      save: '<path d="M2 2h10l2 2v10H2zM5 2v4h6V2M4.500 14V9.500h7V14" stroke-width="1.200"/>'
    };
    this.attachShadow({ mode: 'open' }).innerHTML = `
      <style>
        :host { display: flex; align-items: center; justify-content: center; gap: 3px; height: 23px; box-sizing: border-box; margin-top: 1px; color: #fff; font-size: 13.5px; border-radius: 3px; background: var(--c); border: 1px solid var(--b); letter-spacing: -.3px; }
      </style>
      <svg width="15" height="15" viewBox="0 0 16 16" fill="none" stroke="#fff">${icons[this.getAttribute('icon')]}</svg><slot></slot>`;
  }
}
customElements.define('tool-btn', ToolBtn);

class ChartPanel extends HTMLElement {
  constructor() {
    super();
    // bar positions read off the chart, first the left half then the right half, x and top of bar in crop pixels
    const a = [188,714,198,697,209,665,219,708,235,654,250,717,254,711,270,708,280,690,293,681,303,681,314,665,327,702,338,729,359,726,392,729,402,735,413,732,432,721,442,638,452,675,463,726,473,732,486,726,497,697,506,735,518,711,531,732,542,732,555,648,563,726,572,726,585,729,596,726,606,711,624,689,634,729,645,723,657,729,668,667,678,723,689,729,701,735,712,711,724,726,733,732,744,370,759,684,767,711,778,697,795,716,804,732,811,723,828,721,840,721,849,691,860,702,871,708,879,702,894,670,904,729,922,735,930,729,960,721,994,719,1031,585,1069,735,1097,735,1132,700,1168,726,1200,729,1209,708,1220,697,1234,697,1244,662,1257,635,1273,691,1283,708,1290,694,1301,726,1328,735,1341,732,1386,691,1396,694,1406,716,1416,723,1430,729,1441,723,1450,726,1461,729,1470,729,1482,718,1496,700,1505,716,1516,732,1527,691,1538,719,1557,657,1567,716];
    const b = [10,700,23,721,38,726,58,708,75,729,90,711,103,732,115,716,128,708,140,729,161,662,176,721,186,716,200,708,215,713,228,678,240,716,252,716,268,732,281,657,293,718,307,724,318,718,330,726,347,708,358,662,381,713,391,713,403,724,417,700,423,724,439,726,450,708,463,711,483,716,495,729,505,711,520,729,532,716,548,732,576,729,588,732,601,641,613,632,634,646,647,716,658,716,673,724,713,735,750,729,766,718,778,729,790,724,802,716,817,724,830,686,843,721,862,716,876,672,888,651,903,686,915,711,927,675,941,700,957,662,967,689,976,729,992,711,1006,678,1025,675,1061,528,1071,665,1083,721,1098,684,1114,552,1131,672,1144,705,1156,694,1172,643,1180,711,1200,624,1210,662,1225,716,1236,729,1250,724,1264,718,1280,721,1348,729,1354,721];
    let bars = '';
    const bar = (x, top) => {
      const y = 820 + top / 3;
      bars += `<path d="M${x.toFixed(1)} ${y.toFixed(1)}V1066"/>`;
    };
    for (let i = 0; i < a.length; i += 2) bar(30 + a[i] / 1.65, a[i + 1]);
    for (let i = 0; i < b.length; i += 2) bar(980 + b[i] / 1.962, b[i + 1]);
    let years = '';
    for (let i = 0; i <= 18; i++) {
      const x = 197 + i * 82.6;
      years += `<path d="M${x} 1066v6" stroke="#ccd6eb"/><text x="${x}" y="1083" text-anchor="middle">${1999 + i}</text>`;
    }
    const grid = [[903, '6k'], [958, '4k'], [1012, '2k'], [1066, '0']].map(([y, t]) =>
      `<path d="M126 ${y}H1696" stroke="${t === '0' ? '#ccd6eb' : '#e6e6e6'}" stroke-width="1.400"/><text x="113" y="${y + 4}" text-anchor="end">${t}</text>`).join('');
    this.attachShadow({ mode: 'open' }).innerHTML = `
      <style>
        :host { display: block; width: 1710px; height: 290px; box-sizing: border-box; padding: 0 15px 0 16px; background: #fff; box-shadow: 0 0 4px rgba(0,0,0,.1); ${UI_FONT} }
        .inner { height: 290px; box-sizing: border-box; border-left: 1px solid #e8e8e8; border-right: 1px solid #e8e8e8; padding-top: 16px; }
        .ctrls { display: flex; height: 24px; padding-left: 14px; }
        .ctrls b { font-size: 13px; color: #3f7fd6; line-height: 22px; letter-spacing: -.4px; white-space: nowrap; ${HEAVY} }
        svg.chart { display: block; width: 1678px; height: 243px; font-size: 11.5px; fill: #555; letter-spacing: 0; }
      </style>
      <div class="inner">
        <div class="ctrls">
          <b style="width:27px">Data</b>
          <spin-select style="width:76px;margin-right:5px">DWR_EMP</spin-select>
          <b style="width:51px">Location</b>
          <spin-select style="width:76px;margin-right:5px">all</spin-select>
          <b style="width:35px">Graph</b>
          <spin-select style="width:77px;margin-right:4px">Column</spin-select>
          <spin-select style="width:76px;margin-right:9px">Tiles</spin-select>
          <tool-btn icon="graph" style="width:83px;margin-right:5px;--c:#8cc63f;--b:#84bb3a">Graph</tool-btn>
          <tool-btn icon="sliders" style="width:94px;margin-right:4px;--c:#ffb941;--b:#f3af3a">Plotlines</tool-btn>
          <tool-btn icon="reset" style="width:76px;margin-right:6px;--c:#2f7dd1;--b:#2a72c0">Reset</tool-btn>
          <tool-btn icon="resize" style="width:79px;margin-right:4px;--c:#fb5117;--b:#ec4a12">Resize</tool-btn>
          <tool-btn icon="save" style="width:72px;--c:#78909c;--b:#6e8591">Save</tool-btn>
        </div>
        <svg class="chart" viewBox="54 867 1678 243">
          <text x="871" y="884" text-anchor="middle" font-size="12" fill="#333" letter-spacing="-.08">C9-L Mollusca at West Canal @ Clifton Court Intake Left</text>
          <path d="M1683 882h15M1683 887h15M1683 892h15" stroke="#666" stroke-width="2.800"/>
          ${grid}
          <g stroke="#a83fa8" stroke-width="1.300" fill="none">${bars}</g>
          ${years}
          <text transform="translate(90 985) rotate(-90)" text-anchor="middle" style="font-family:'DejaVu Sans',sans-serif;font-size:10.2px" fill="#666">Average Organisms/m²</text>
          <text x="866" y="1117" text-anchor="middle" font-size="12.500" fill="#333">C9-L Mollusca Average Plus 2 Standard Deviation</text>
        </svg>
      </div>`;
  }
}
customElements.define('chart-panel', ChartPanel);
</script>
</body>
</html>
